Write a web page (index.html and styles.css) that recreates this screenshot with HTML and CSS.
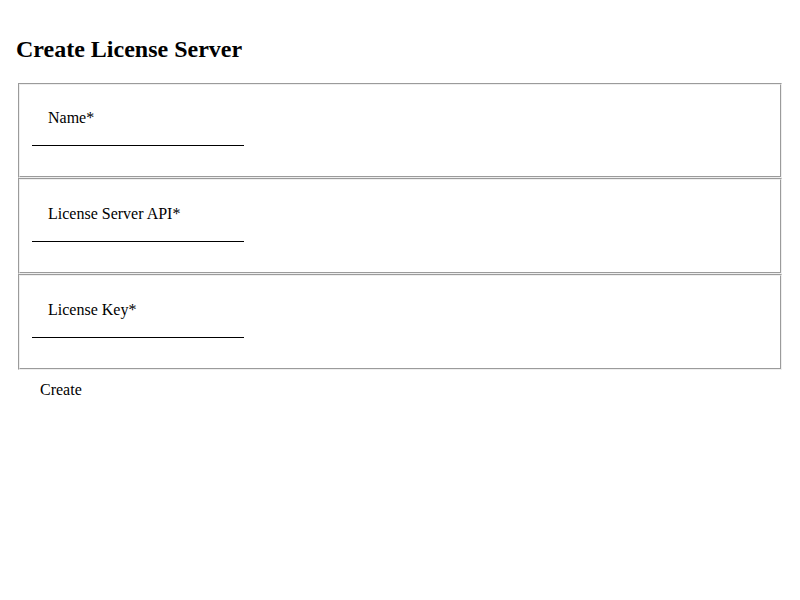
FILE: index.html
```html
<!DOCTYPE html>
<html lang="en">
<head>
<meta charset="utf-8">
<title>Create License Server</title>
<link rel="stylesheet" href="styles.css">
</head>
<body>
<div class="page">
  <h2 class="title">Create License Server</h2>
  <form class="form">
    <fieldset class="group">
      <div class="field">
        <label class="label" for="name">Name*</label>
        <input class="input" id="name" type="text">
      </div>
    </fieldset>
    <fieldset class="group">
      <div class="field">
        <label class="label" for="api">License Server API*</label>
        <input class="input" id="api" type="text">
      </div>
    </fieldset>
    <fieldset class="group">
      <div class="field">
        <label class="label" for="key">License Key*</label>
        <input class="input" id="key" type="text">
      </div>
    </fieldset>
    <button class="submit" type="button">Create</button>
  </form>
</div>
</body>
</html>
```

FILE: styles.css
```css
html, body {
  margin: 0;
  background: #ffffff;
}

body {
  font-family: "Liberation Serif", "Times New Roman", serif;
  font-size: 16px;
  color: #000000;
}

.page {
  padding: 16px;
}

.title {
  font-size: 24px;
  font-weight: bold;
  margin: 19.92px 0;
}

.form {
  margin: 0;
}

.group {
  margin: 0 2px;
  padding: 0.35em 0.75em 0.625em;
  border: 2px groove ThreeDFace;
}

.field {
  padding: 19px 0 20px;
}

.label {
  display: block;
  padding-left: 16px;
  line-height: normal;
}

.input {
  display: block;
  box-sizing: border-box;
  width: 212px;
  height: 19px;
  margin: 0;
  padding: 0;
  border: 0;
  border-bottom: 1px solid #000000;
  background: transparent;
  font-family: "Liberation Serif", serif;
  font-size: 16px;
  outline: none;
}

.submit {
  display: block;
  margin: 0;
  padding: 11px 24px 12px;
  border: 0;
  background: transparent;
  font-family: "Liberation Serif", "Times New Roman", serif;
  font-size: 16px;
  color: #000000;
  line-height: normal;
}
```
